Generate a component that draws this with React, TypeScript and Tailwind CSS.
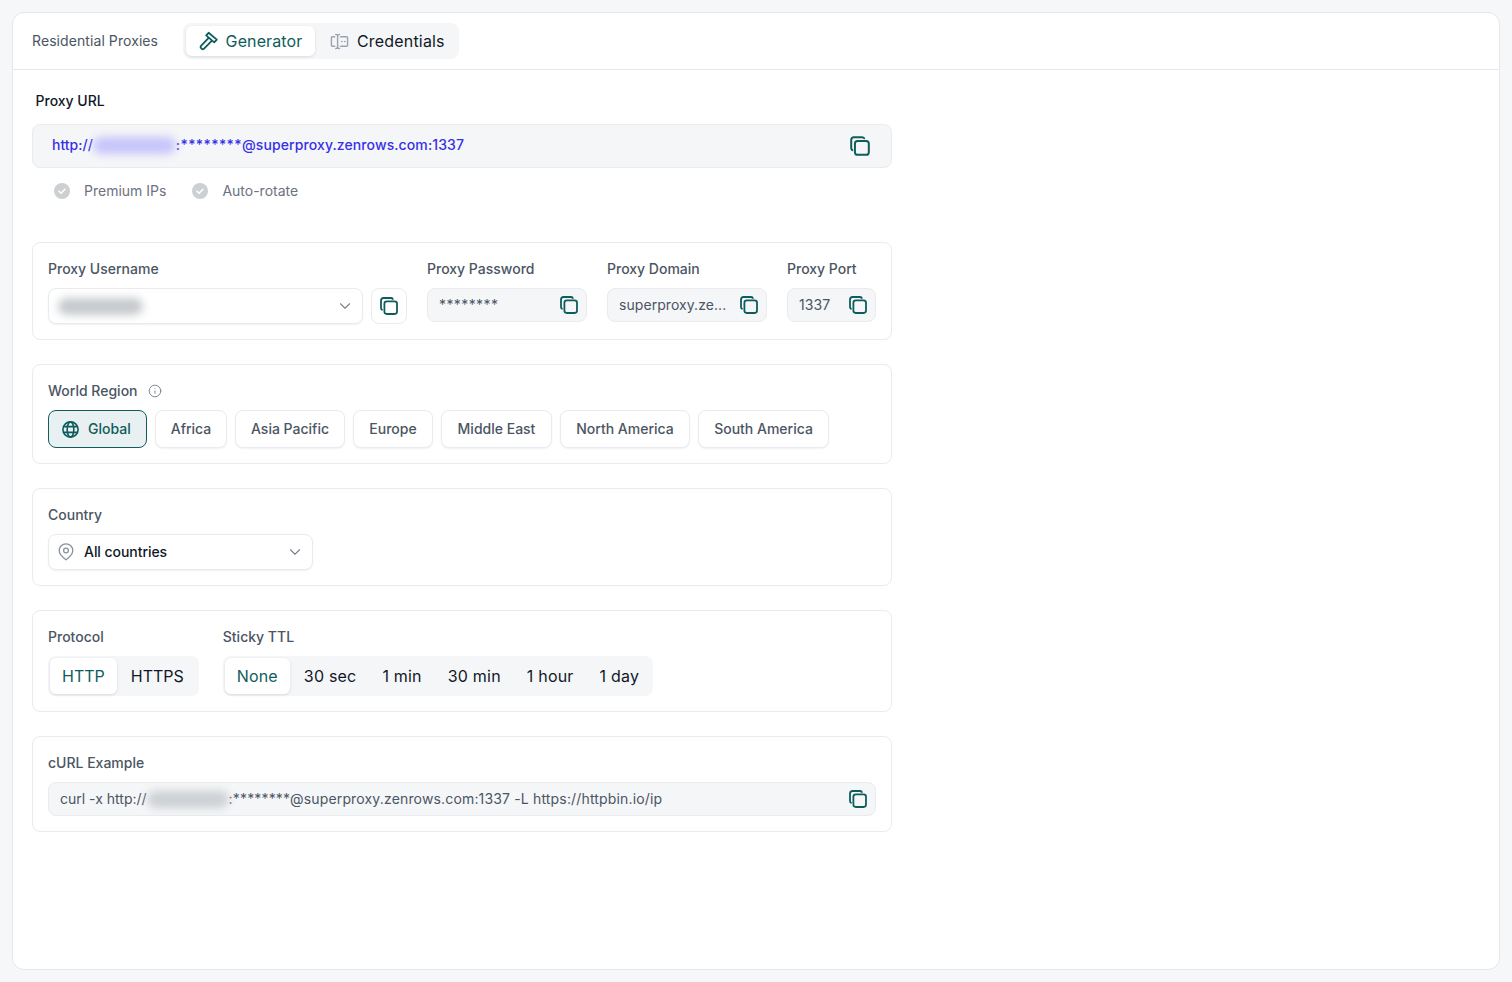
import { ChevronDown, Info } from "lucide-react";

const CopyIcon = ({ className = "" }: { className?: string }) => (
  <svg viewBox="0 0 20 20" fill="none" className={`w-5 h-5 text-[#0f5c5c] ${className}`}>
    <rect x="5.4" y="5.4" width="12.6" height="12.6" rx="2.4" stroke="currentColor" strokeWidth="1.8" />
    <path d="M3 13.800c-.6-.4-1-1-1-1.900V4.400C2 3 3 2 4.400 2h7.500c.9 0 1.500.4 1.900 1" stroke="currentColor" strokeWidth="1.800" strokeLinecap="round" />
  </svg>
);

const HammerIcon = () => (
  <svg viewBox="0 0 20 20" fill="none" className="w-5 h-5 text-[#0f5c5c]" stroke="currentColor" strokeWidth="1.800" strokeLinejoin="round" strokeLinecap="round">
    <path d="M9.600 1.800l8.200 6.800-2.600 2.800-8-7z" />
    <path d="M9.200 7.400L2 14.800a1.600 1.600 0 0 0 .1 2.300l.7.700a1.600 1.600 0 0 0 2.300-.1l7.100-7.400" />
  </svg>
);

const CredentialsIcon = () => (
  <svg viewBox="0 0 20 20" fill="none" className="w-[19px] h-[19px] text-[#9ca3af]" stroke="currentColor" strokeWidth="1.500" strokeLinecap="round" strokeLinejoin="round">
    <path d="M5 5H2.500a1 1 0 0 0-1 1v8a1 1 0 0 0 1 1H5" />
    <path d="M11 5h6.500a1 1 0 0 1 1 1v8a1 1 0 0 1-1 1H11" />
    <path d="M6 2.500c1.200 0 2 .6 2 1.600v11.800c0 1-.8 1.600-2 1.600M10 2.500c-1.200 0-2 .6-2 1.600M10 17.500c-1.200 0-2-.6-2-1.600" />
    <path d="M12.500 10h.01M15.500 10h.01" strokeWidth="1.800" />
  </svg>
);

const GlobeIcon = () => (
  <svg viewBox="0 0 20 20" fill="none" className="w-[19px] h-[19px]" stroke="currentColor" strokeWidth="1.700">
    <circle cx="10" cy="10" r="8" />
    <ellipse cx="10" cy="10" rx="3.500" ry="8" />
    <path d="M2.800 7h14.400M2.800 13h14.400" />
  </svg>
);

const CheckBadge = () => (
  <svg viewBox="0 0 16 16" className="w-4 h-4">
    <circle cx="8" cy="8" r="8" fill="#ccd0d3" />
    <path d="M5 8.200l2.100 2L11 6.200" fill="none" stroke="#fff" strokeWidth="1.500" strokeLinecap="round" strokeLinejoin="round" />
  </svg>
);

const PinIcon = () => (
  <svg viewBox="0 0 16 18" fill="none" className="w-4 h-[18px] text-[#8b929b]" stroke="currentColor" strokeWidth="1.300">
    <path d="M8 16.800c-1-.9-6.800-4.400-6.800-9.200a6.800 6.800 0 0 1 13.600 0c0 4.800-5.800 8.300-6.800 9.200z" strokeLinejoin="round" />
    <circle cx="8" cy="7.500" r="2.400" />
  </svg>
);

const Blur = ({ className }: { className: string }) => (
  <span className={`inline-block rounded-full blur-[4px] ${className}`} />
);

const Label = ({ children }: { children: React.ReactNode }) => (
  <div className="text-sm font-medium leading-5 text-[#4b5563]">{children}</div>
);

const ReadOnlyField = ({ value, width, mono }: { value: string; width: string; mono?: boolean }) => (
  <div className={`h-[34px] flex items-center justify-between pl-[11px] pr-[7px] rounded-lg bg-[#f5f6f8] border border-[#e9ebef] ${width}`}>
    <span className={`text-sm text-[#4b5563] ${mono ? "tracking-[0.4px]" : "tracking-[0.06px]"}`}>{value}</span>
    <CopyIcon />
  </div>
);

const Card = ({ children, className = "" }: { children: React.ReactNode; className?: string }) => (
  <section className={`rounded-lg border border-[#e9ebef] px-[15px] pt-4 ${className}`}>{children}</section>
);

const regions = [
  { name: "Africa", width: "w-[72px]" },
  { name: "Asia Pacific", width: "w-[110px]" },
  { name: "Europe", width: "w-20" },
  { name: "Middle East", width: "w-[111px]" },
  { name: "North America", width: "w-[130px]" },
  { name: "South America", width: "w-[131px]" },
];
const ttls = ["30 sec", "1 min", "30 min", "1 hour", "1 day"];

export default function App() {
  return (
    <div className="h-[982px] bg-[#f6f7f9] p-3 font-['Inter',sans-serif] antialiased">
      <main className="h-[958px] rounded-xl border border-[#e5e7eb] bg-white">
        {/* tabs */}
        <header className="h-[57px] flex items-center border-b border-[#e5e7eb] pl-[19px]">
          <span className="text-sm text-[#4b5563] w-[151px] tracking-[0.08px]">Residential Proxies</span>
          <div className="flex h-9 items-center rounded-lg bg-[#f5f6f8] p-[3px]">
            <div className="h-[30px] w-[129px] flex items-center justify-center gap-[7px] rounded-md bg-white shadow-[0_1px_3px_rgba(16,24,40,0.12)] text-base tracking-[0.12px] text-[#0f5c5c]">
              <HammerIcon />
              Generator
            </div>
            <div className="h-[30px] flex items-center gap-[8px] pl-[15px] pr-[11px] text-base tracking-[0.18px] text-[#111827]">
              <CredentialsIcon />
              Credentials
            </div>
          </div>
        </header>

        <div className="w-[860px] ml-[19px] pt-[21px]">
          {/* proxy url */}
          <div className="pl-[3.5px] text-sm font-medium leading-5 text-[#111827]">Proxy URL</div>
          <div className="mt-[13px] h-11 flex items-center justify-between rounded-lg border border-[#e9ebef] bg-[#f5f6f8] pl-[19px] pr-[20px]">
            <div className="flex items-center text-sm font-medium text-[#3730e8] -mt-[2px]">
              http://
              <Blur className="w-[83px] h-[17px] bg-[#c7c4fb]" />
              <span className="tracking-[0.1px]"><span className="tracking-[0.4px]">:********</span>@superproxy.zenrows.com:1337</span>
            </div>
            <CopyIcon className="w-[22px] h-[22px]" />
          </div>
          <div className="mt-[13px] flex items-center pl-[22px] text-sm leading-5 text-[#6b7280]">
            <CheckBadge />
            <span className="ml-[14px]">Premium IPs</span>
            <span className="ml-[26px]"><CheckBadge /></span>
            <span className="ml-[14px]">Auto-rotate</span>
          </div>

          <div className="mt-[41px] flex flex-col gap-6">
            {/* credentials */}
            <Card className="h-[98px]">
              <div className="flex gap-5">
                <div>
                  <Label>Proxy Username</Label>
                  <div className="mt-[9px] flex gap-2">
                    <div className="h-9 w-[315px] flex items-center justify-between rounded-lg border border-[#e9ebef] bg-white pl-[9px] pr-2 shadow-[0_1px_2px_rgba(16,24,40,0.06)]">
                      <Blur className="w-[85px] h-[17px] bg-[#c6cacd]" />
                      <ChevronDown className="w-[18px] h-[18px] text-[#7b838d]" strokeWidth={1.5} />
                    </div>
                    <div className="h-9 w-9 flex items-center justify-center rounded-lg border border-[#e9ebef] bg-white">
                      <CopyIcon />
                    </div>
                  </div>
                </div>
                <div>
                  <Label>Proxy Password</Label>
                  <div className="mt-[9px]"><ReadOnlyField value="********" width="w-40" mono /></div>
                </div>
                <div>
                  <Label>Proxy Domain</Label>
                  <div className="mt-[9px]"><ReadOnlyField value="superproxy.ze..." width="w-40" /></div>
                </div>
                <div>
                  <Label>Proxy Port</Label>
                  <div className="mt-[9px]"><ReadOnlyField value="1337" width="w-[89px]" /></div>
                </div>
              </div>
            </Card>

            {/* world region */}
            <Card className="h-[100px]">
              <div className="flex items-center gap-[10px]">
                <Label>World Region</Label>
                <Info className="w-[14px] h-[14px] text-[#7b838d]" strokeWidth={1.6} />
              </div>
              <div className="mt-[9px] flex gap-2">
                <div className="h-[38px] w-[99px] flex items-center gap-2 rounded-lg border border-[#0f5c5c] bg-[#e9f0f1] pl-3 text-sm font-medium text-[#0f5c5c]">
                  <GlobeIcon />
                  Global
                </div>
                {regions.map((region) => (
                  <div key={region.name} className={`h-[38px] flex items-center justify-center rounded-lg border border-[#e9ebef] bg-white text-sm font-medium text-[#4b5563] shadow-[0_1px_2px_rgba(16,24,40,0.06)] ${region.width}`}>
                    {region.name}
                  </div>
                ))}
              </div>
            </Card>

            {/* country */}
            <Card className="h-[98px]">
              <Label>Country</Label>
              <div className="mt-[9px] h-9 w-[265px] flex items-center justify-between rounded-lg border border-[#e9ebef] bg-white pl-[9px] pr-[8px] shadow-[0_1px_2px_rgba(16,24,40,0.06)]">
                <div className="flex items-center gap-[10px] text-sm font-medium text-[#111827] tracking-[-0.05px]">
                  <PinIcon />
                  All countries
                </div>
                <ChevronDown className="w-[18px] h-[18px] text-[#7b838d]" strokeWidth={1.5} />
              </div>
            </Card>

            {/* protocol + ttl */}
            <Card className="h-[102px]">
              <div className="flex gap-6">
                <div>
                  <Label>Protocol</Label>
                  <div className="mt-[9px] h-10 flex items-center rounded-lg bg-[#f5f6f8] p-[2px] text-base text-[#111827]">
                    <span className="h-9 flex items-center rounded-md bg-white px-3 text-[#0f5c5c] shadow-[0_1px_3px_rgba(16,24,40,0.12)]">HTTP</span>
                    <span className="pl-[14px] pr-[13px]">HTTPS</span>
                  </div>
                </div>
                <div>
                  <Label>Sticky TTL</Label>
                  <div className="mt-[9px] h-10 flex items-center rounded-lg bg-[#f5f6f8] p-[2px] pr-[1px] text-base text-[#111827]">
                    <span className="h-9 flex items-center rounded-md bg-white px-3 tracking-[0.15px] text-[#0f5c5c] shadow-[0_1px_3px_rgba(16,24,40,0.12)]">None</span>
                    <div className="flex pl-px tracking-[0.2px]">
                      {ttls.map((ttl) => (
                        <span key={ttl} className="px-[13px]">{ttl}</span>
                      ))}
                    </div>
                  </div>
                </div>
              </div>
            </Card>

            {/* curl */}
            <Card className="h-24">
              <Label>cURL Example</Label>
              <div className="mt-[9px] h-[34px] flex items-center justify-between rounded-lg border border-[#e9ebef] bg-[#f5f6f8] pl-[11px] pr-[7px]">
                <div className="flex items-center text-sm text-[#4b5563]">
                  curl -x http://
                  <Blur className="w-[82px] h-[17px] bg-[#cdd0d4]" />
                  <span className="tracking-[0.16px]">:********@superproxy.zenrows.com:1337 -L https://httpbin.io/ip</span>
                </div>
                <CopyIcon />
              </div>
            </Card>
          </div>
        </div>
      </main>
    </div>
  );
}
